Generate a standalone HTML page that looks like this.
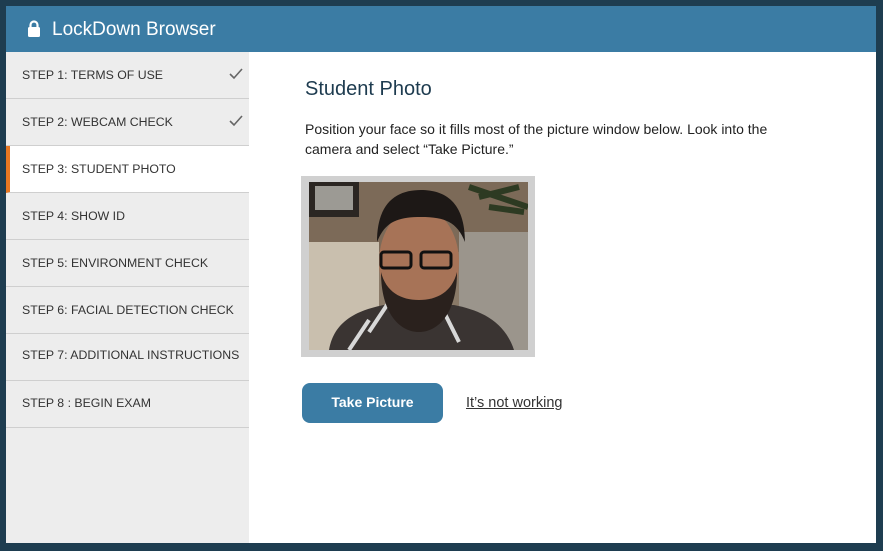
<!DOCTYPE html>
<html><head><meta charset="utf-8"><style>
*{margin:0;padding:0;box-sizing:border-box}
body{width:883px;height:551px;background:#1e3d50;font-family:"Liberation Sans",sans-serif;position:relative;overflow:hidden}
#win{position:absolute;left:6px;top:6px;width:870px;height:537px;background:#fff}
#hdr{position:absolute;left:0;top:0;width:870px;height:46px;background:#3b7ca4;color:#fff;font-size:19px}
#hdr span{position:absolute;left:46px;top:13px}
#side{position:absolute;left:0;top:46px;width:243px;height:491px;background:#ededed}
.it{position:absolute;left:0;width:243px;height:47px;border-bottom:1px solid #cfcfcf;font-size:12.3px;color:#333;padding-left:16px;line-height:46px}
.act{background:#fff;border-left:4px solid #e87722;padding-left:12px}
.ck{position:absolute;right:6px;top:16px}
h1{position:absolute;left:305px;top:78px;font-size:20px;font-weight:normal;color:#1d3b4f}
p{position:absolute;left:305px;top:119px;width:495px;font-size:14px;line-height:20px;color:#222}
#ph{position:absolute;left:301px;top:176px;width:234px;height:181px;background:#d0d0d0}
#btn{position:absolute;left:302px;top:383px;width:141px;height:40px;border-radius:8px;background:#3b7ca4;color:#fff;font-weight:bold;font-size:14px;text-align:center;line-height:39px}
#lnk{position:absolute;left:466px;top:395px;font-size:14.5px;color:#333;text-decoration:underline}
</style></head><body>
<div id="win">
<div id="hdr"><svg style="position:absolute;left:21px;top:14px" width="14" height="17" viewBox="0 0 14 17"><path d="M3.5 7V5a3.5 3.5 0 0 1 7 0v2" fill="none" stroke="#fff" stroke-width="2.2"/><rect x="1" y="7" width="12" height="10" rx="1.5" fill="#fff"/></svg><span>LockDown Browser</span></div>
<div id="side">
<div class="it" style="top:0">STEP 1: TERMS OF USE<svg class="ck" width="14" height="12" viewBox="0 0 14 12"><path d="M1 6l4 4 8-9" fill="none" stroke="#666" stroke-width="1.6"/></svg></div>
<div class="it" style="top:47px">STEP 2: WEBCAM CHECK<svg class="ck" width="14" height="12" viewBox="0 0 14 12"><path d="M1 6l4 4 8-9" fill="none" stroke="#666" stroke-width="1.6"/></svg></div>
<div class="it act" style="top:94px">STEP 3: STUDENT PHOTO</div>
<div class="it" style="top:141px">STEP 4: SHOW ID</div>
<div class="it" style="top:188px">STEP 5: ENVIRONMENT CHECK</div>
<div class="it" style="top:235px">STEP 6: FACIAL DETECTION CHECK</div>
<div class="it" style="top:282px;line-height:42px">STEP 7: ADDITIONAL INSTRUCTIONS</div>
<div class="it" style="top:329px;line-height:44px">STEP 8 : BEGIN EXAM</div>
</div>
</div>
<h1>Student Photo</h1>
<p>Position your face so it fills most of the picture window below. Look into the camera and select “Take Picture.”</p>
<div id="ph"><svg style="position:absolute;left:8px;top:6px" width="219" height="168" viewBox="0 0 219 168">
<rect width="219" height="168" fill="#8a7a68"/>
<rect x="0" y="0" width="219" height="70" fill="#7c6a58"/>
<rect x="0" y="60" width="70" height="108" fill="#c9bfae"/>
<rect x="150" y="50" width="69" height="118" fill="#9b958c"/>
<rect x="0" y="0" width="50" height="35" fill="#2b2622"/>
<rect x="6" y="4" width="38" height="24" fill="#9c9a94"/>
<path d="M160 5l59 20M170 15l40-10M180 25l35 5" stroke="#2d3a22" stroke-width="6"/>
<path d="M20 168c5-30 30-40 55-45h70c25 5 50 15 60 45z" fill="#3a3432"/>
<path d="M60 150l20-30M130 120l20 40M40 168l20-30" stroke="#d8d8d8" stroke-width="4"/>
<ellipse cx="110" cy="80" rx="40" ry="55" fill="#a77357"/>
<path d="M68 60c0-40 20-52 44-52s44 12 44 52c-8-20-20-25-44-25s-36 5-44 25z" fill="#1d1816"/>
<path d="M72 90c0 40 18 60 38 60s38-20 38-60c-5 20-20 28-38 28s-33-8-38-28z" fill="#2a211d"/>
<rect x="72" y="70" width="30" height="16" rx="3" fill="none" stroke="#111" stroke-width="3"/>
<rect x="112" y="70" width="30" height="16" rx="3" fill="none" stroke="#111" stroke-width="3"/>
</svg></div>
<div id="btn">Take Picture</div>
<div id="lnk">It’s not working</div>
</body></html>
